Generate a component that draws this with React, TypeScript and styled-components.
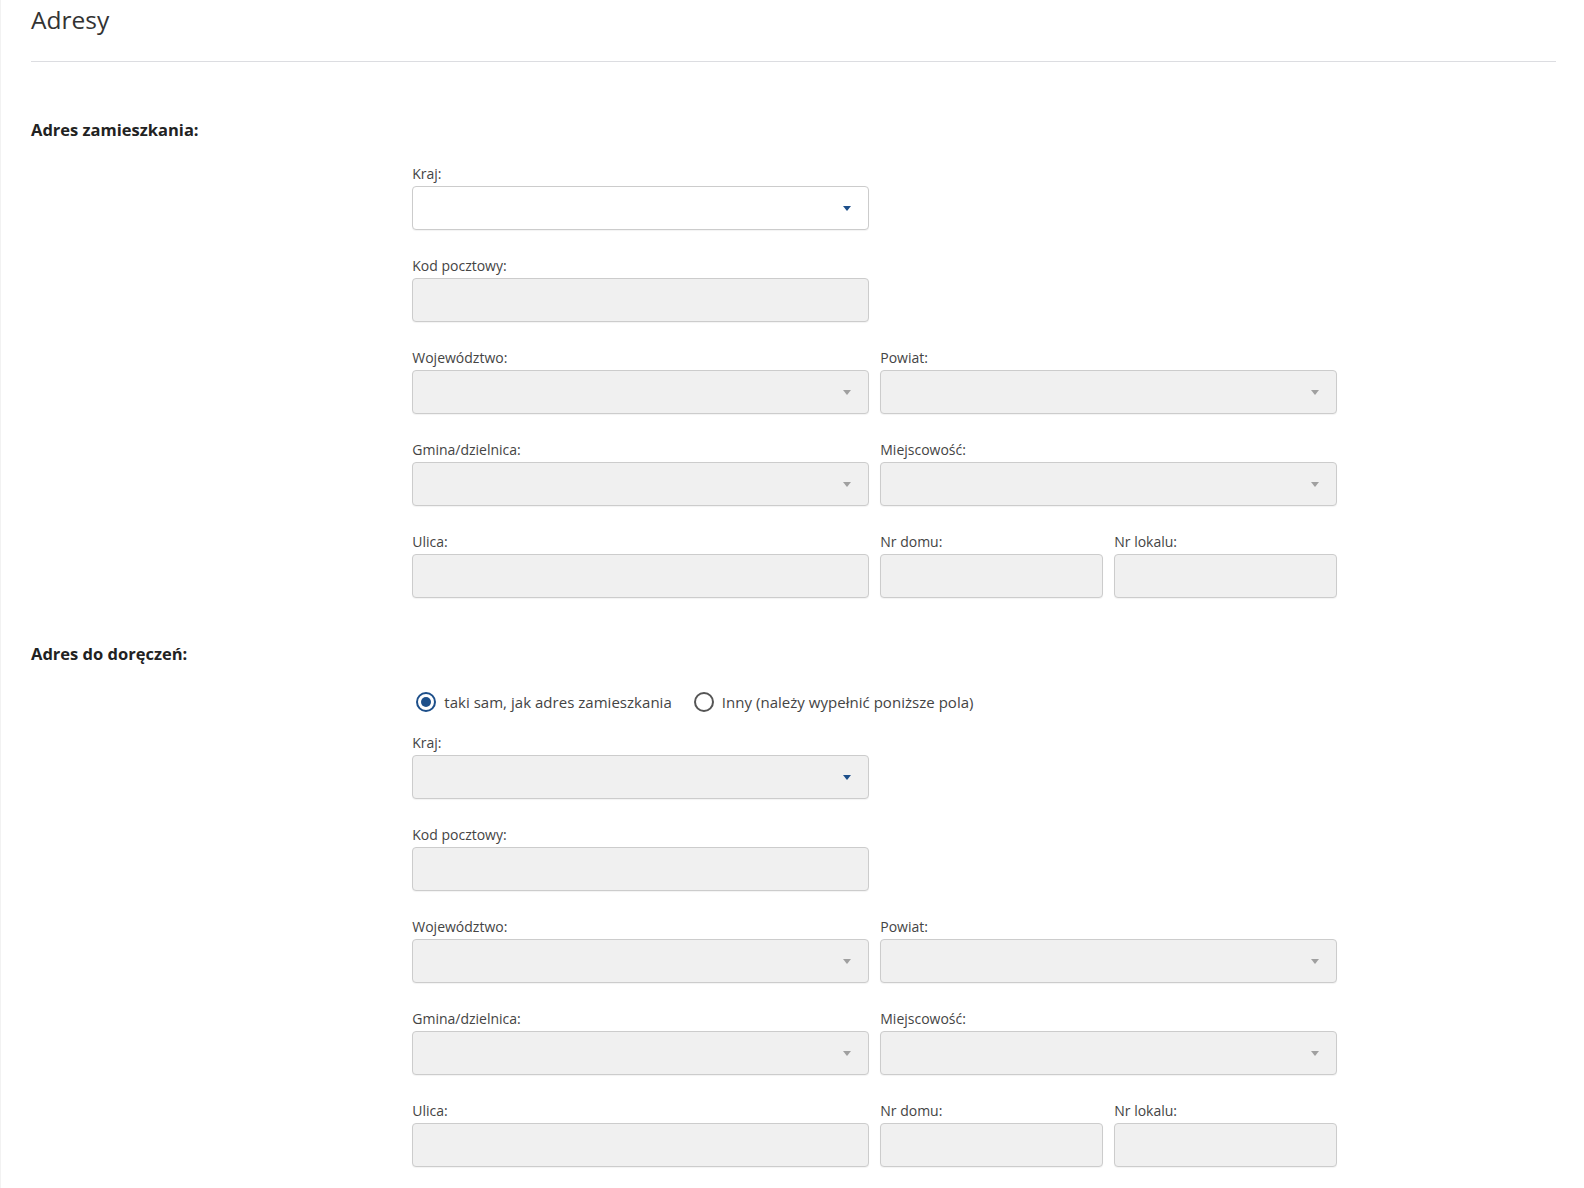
import React from 'react';
import styled, {createGlobalStyle} from "styled-components";

const GlobalStyle = createGlobalStyle`
  html, body {
    margin: 0;
    padding: 0;
    background: #fff;
    font-family: "Open Sans", "Liberation Sans", sans-serif;
    color: #333;
  }
`;

const Page = styled.div`
  min-height: 1188px;
  box-sizing: border-box;
  padding: 0 28px 20px 30px;
  border-left: 1px solid #f2f2f2;
`;

const Header = styled.div`
  padding-top: 4px;
  padding-bottom: 25px;
  border-bottom: 1px solid #dcdde1;
`;

const Title = styled.h2`
  margin: 0;
  font-size: 24.5px;
  line-height: 32px;
  font-weight: 400;
  color: #333;
`;

const Section = styled.section<{ $top: number }>`
  margin-top: ${p => p.$top}px;
`;

const SectionTitle = styled.h3`
  margin: 0;
  font-size: 16.5px;
  line-height: 23px;
  font-weight: 700;
  color: #222;
`;

const Fields = styled.div<{ $top: number }>`
  margin-left: 25%;
  margin-top: ${p => p.$top}px;
  display: grid;
  grid-template-columns: repeat(4, 223px);
  column-gap: 11px;
  row-gap: 26px;
`;

const Field = styled.div<{ $span: number; $start?: number }>`
  grid-column: ${p => (p.$start ? `${p.$start} / span ${p.$span}` : `span ${p.$span}`)};
  display: flex;
  flex-direction: column;
`;

const Label = styled.label`
  font-size: 14px;
  line-height: 19px;
  margin-bottom: 3px;
  color: #444;
`;

const Box = styled.div<{ $white?: boolean }>`
  position: relative;
  height: 44px;
  box-sizing: border-box;
  border: 1px solid #cccccc;
  border-radius: 4px;
  background: ${p => (p.$white ? '#fff' : '#f0f0f0')};
  box-shadow: 0 1px 1px rgba(0, 0, 0, 0.05);
`;

const Caret = styled.span<{ $blue?: boolean }>`
  position: absolute;
  right: 17px;
  top: 50%;
  margin-top: -2px;
  width: 0;
  height: 0;
  border-left: 4px solid transparent;
  border-right: 4px solid transparent;
  border-top: 5px solid ${p => (p.$blue ? '#1d4f8a' : '#a0a0a0')};
`;

const RadioRow = styled.div`
  margin-left: 25%;
  margin-top: 26px;
  display: flex;
  align-items: center;
  gap: 22px;
  height: 22px;
  padding-left: 4px;
`;

const RadioOption = styled.label`
  display: flex;
  align-items: center;
  gap: 8px;
  font-size: 15px;
  line-height: 22px;
  color: #444;
  letter-spacing: 0.03px;
`;

const RadioCircle = styled.span<{ $checked?: boolean }>`
  width: 20px;
  height: 20px;
  box-sizing: border-box;
  border-radius: 50%;
  border: 2px solid ${p => (p.$checked ? '#1d4f8a' : '#555')};
  display: flex;
  align-items: center;
  justify-content: center;
  &::after {
    content: "";
    display: ${p => (p.$checked ? 'block' : 'none')};
    width: 10px;
    height: 10px;
    border-radius: 50%;
    background: #1d4f8a;
  }
`;

type FieldDef = { label: string; span: number; start?: number; select?: boolean; blue?: boolean; white?: boolean };

const fieldsFor = (firstWhite: boolean): FieldDef[] => [
    {label: 'Kraj:', span: 2, select: true, blue: true, white: firstWhite},
    {label: 'Kod pocztowy:', span: 2, start: 1},
    {label: 'Województwo:', span: 2, start: 1, select: true},
    {label: 'Powiat:', span: 2, select: true},
    {label: 'Gmina/dzielnica:', span: 2, start: 1, select: true},
    {label: 'Miejscowość:', span: 2, select: true},
    {label: 'Ulica:', span: 2, start: 1},
    {label: 'Nr domu:', span: 1},
    {label: 'Nr lokalu:', span: 1},
];

function AddressFields({items}: { items: FieldDef[] }) {
    return (
        <>
            {items.map(f => (
                <Field key={f.label} $span={f.span} $start={f.start}>
                    <Label>{f.label}</Label>
                    <Box $white={f.white}>{f.select && <Caret $blue={f.blue}/>}</Box>
                </Field>
            ))}
        </>
    );
}

export default function App() {
    return (
        <Page>
            <GlobalStyle/>
            <Header>
                <Title>Adresy</Title>
            </Header>

            <Section $top={56}>
                <SectionTitle>Adres zamieszkania:</SectionTitle>
                <Fields $top={23}>
                    <AddressFields items={fieldsFor(true)}/>
                </Fields>
            </Section>

            <Section $top={44}>
                <SectionTitle>Adres do doręczeń:</SectionTitle>
                <RadioRow>
                    <RadioOption><RadioCircle $checked/>taki sam, jak adres zamieszkania</RadioOption>
                    <RadioOption><RadioCircle/>Inny (należy wypełnić poniższe pola)</RadioOption>
                </RadioRow>
                <Fields $top={20}>
                    <AddressFields items={fieldsFor(false)}/>
                </Fields>
            </Section>
        </Page>
    );
}
